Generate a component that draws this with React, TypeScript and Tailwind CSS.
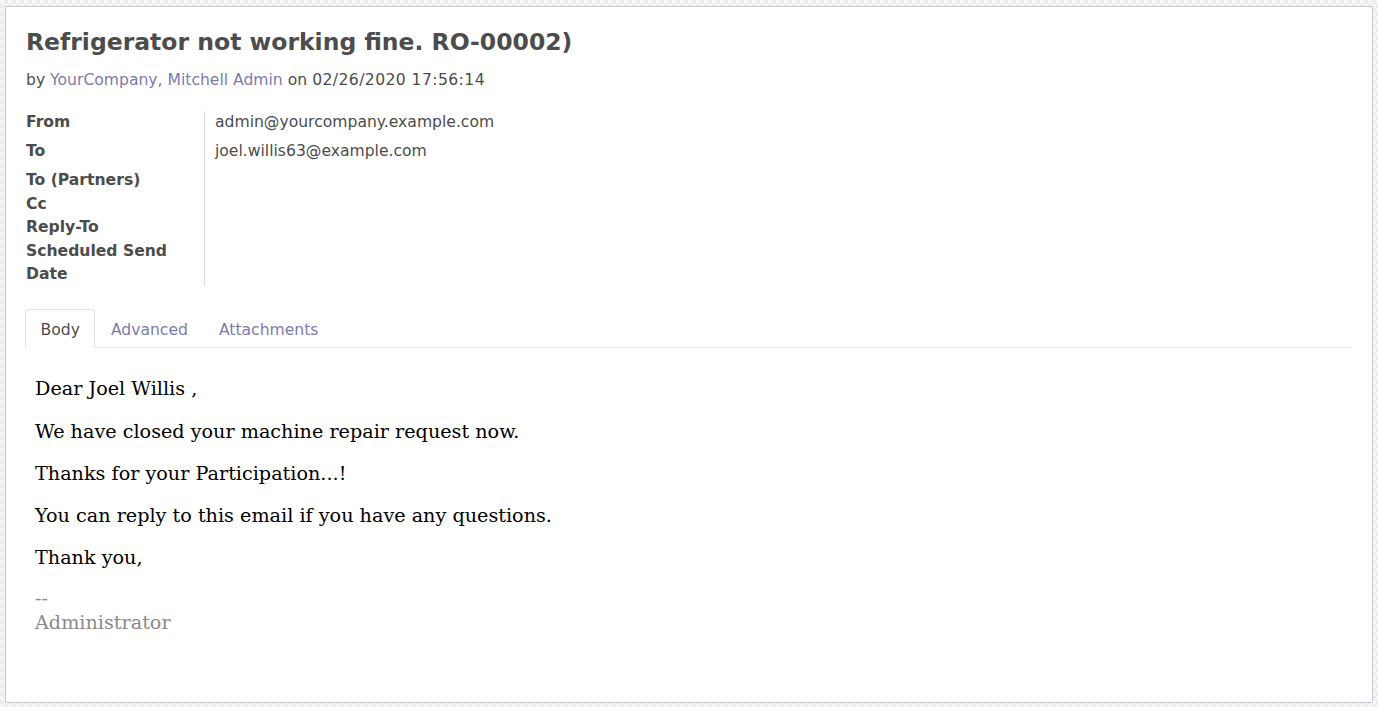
import { useState } from 'react';

type Field = {
  label: string;
  value?: string;
};

const fields: Field[] = [
  { label: 'From', value: 'admin@yourcompany.example.com' },
  { label: 'To', value: 'joel.willis63@example.com' },
  { label: 'To (Partners)' },
  { label: 'Cc' },
  { label: 'Reply-To' },
  { label: 'Scheduled Send Date' },
];

// per-row spacing, read off the original screen
const labelPad = ['pt-[2px] pb-[3px]', 'pt-[3px] pb-[3px]', 'pt-[3px]', '', '', ''];
const valuePad = ['mt-[2px] pb-[3px]', 'pt-[3px] pb-[3px]', '', '', '', ''];

const tabs = ['Body', 'Advanced', 'Attachments'];

export default function App() {
  const [activeTab, setActiveTab] = useState('Body');

  return (
    <div className="h-[707px] bg-[repeating-conic-gradient(#ececec_0%_25%,#f7f7f7_0%_50%)] bg-[length:8px_8px] px-[5px] pt-[6px] pb-[4px] font-['DejaVu_Sans',sans-serif] text-[15.6px] leading-[1.5] text-[#4c4c4c]">
      <div className="h-full border border-[#c8c8d3] bg-white px-[20px] pt-[21px]">
        <h1 className="text-[23.5px] font-bold leading-[1.2] text-[#4c4c4c]">Refrigerator not working fine. RO-00002)</h1>
        <div className="mt-[13px]">
          by <span className="text-[#7c7bad]">YourCompany, Mitchell Admin</span> on{' '}
          <span className="tracking-[0.42px]">02/26/2020 17:56:14</span>
        </div>

        <div className="mt-[16px]">
          {fields.map((field, index) => (
            <div key={field.label} className="flex">
              <div className={`w-[178px] shrink-0 pr-[10px] font-bold ${labelPad[index]}`}>{field.label}</div>
              <div className={`flex-1 border-l border-[#dcdcdc] pl-[10px] ${valuePad[index]}`}>{field.value}</div>
            </div>
          ))}
        </div>

        <div className="mt-[23px] flex border-b border-[#e2e2e2]">
          {tabs.map((tab, index) => (
            <button
              key={tab}
              type="button"
              onClick={() => setActiveTab(tab)}
              className={`-mb-px h-[39px] border px-[14.5px] pt-[9px] pb-[5px] leading-[1.5] ${index === 0 ? '-ml-px' : ''} ${
                activeTab === tab
                  ? 'rounded-t-[3px] border-[#dee2e6] border-b-white bg-white text-[#4c4c4c]'
                  : 'border-transparent text-[#7c7bad]'
              }`}
            >
              {tab}
            </button>
          ))}
        </div>

        <div className="px-[9px] pt-[28px] font-['DejaVu_Serif',serif] text-[19.2px] leading-[25px] text-black">
          <p className="mb-[17.25px]">Dear Joel Willis ,</p>
          <p className="mb-[17.25px]">We have closed your machine repair request now.</p>
          <p className="mb-[17.25px]">Thanks for your Participation...!</p>
          <p className="mb-[17.25px]">You can reply to this email if you have any questions.</p>
          <p className="mb-[17.25px]">Thank you,</p>
          <div className="text-[#8a8a8a]">
            <div className="leading-[22px]">--</div>
            <div>Administrator</div>
          </div>
        </div>
      </div>
    </div>
  );
}
